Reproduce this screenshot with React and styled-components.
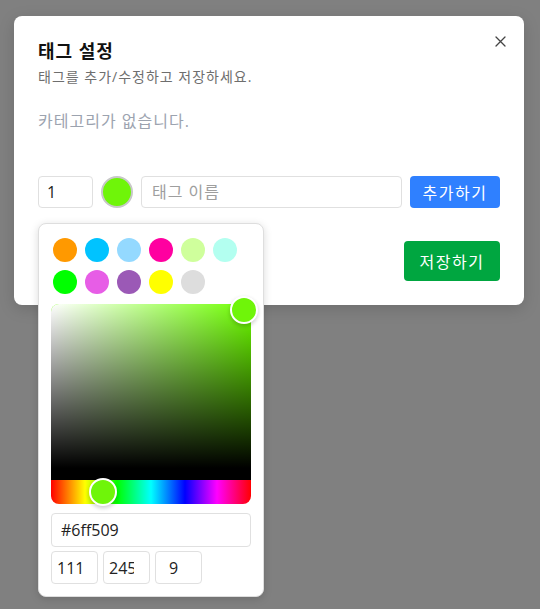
import styled, { createGlobalStyle } from "styled-components";

const FONT = `"Segoe UI", "Open Sans", "Noto Sans CJK KR", sans-serif`;

const GlobalStyle = createGlobalStyle`
  * { box-sizing: border-box; }
  body {
    margin: 0;
    font-family: ${FONT};
    background: #808080;
  }
`;

const SWATCHES = [
  "#ff9900",
  "#00c3ff",
  "#94d9ff",
  "#ff00a0",
  "#cfff9c",
  "#b3fff0",
  "#00ff00",
  "#e75de6",
  "#9b59b6",
  "#ffff00",
  "#dddddd",
];

const Overlay = styled.div`
  min-height: 100vh;
  padding: 16px 0 0 14px;
`;

const Modal = styled.div`
  position: relative;
  width: 510px;
  padding: 24px;
  background: #fff;
  border-radius: 8px;
  box-shadow: 0 4px 16px rgba(0, 0, 0, 0.15);
`;

const Title = styled.h2`
  margin: 0;
  font-size: 18px;
  line-height: 22px;
  font-weight: 700;
  letter-spacing: 1px;
  color: #111;
`;

const Subtitle = styled.p`
  margin: 5px 0 0;
  font-size: 14px;
  line-height: 20px;
  letter-spacing: 1px;
  color: #6e6e6e;
`;

const CloseButton = styled.button`
  position: absolute;
  top: 17px;
  right: 16px;
  width: 16px;
  height: 16px;
  padding: 0;
  border: none;
  background: none;
  display: flex;
  align-items: center;
  justify-content: center;
  cursor: pointer;
`;

const Empty = styled.p`
  margin: 22px 0 43px;
  font-size: 16px;
  line-height: 24px;
  color: #9ca3af;
  letter-spacing: 1px;
`;

const AddRow = styled.div`
  position: relative;
  display: flex;
  align-items: center;
  gap: 8px;
`;

const Field = styled.input`
  height: 32px;
  width: ${(p) => p.$width || "auto"};
  min-width: 0;
  flex: ${(p) => (p.$grow ? 1 : "none")};
  padding: 0 ${(p) => p.$pad || 8}px;
  border: 1px solid #e0e0e0;
  border-radius: 4px;
  font-family: ${FONT};
  font-size: 16px;
  color: #222;
  outline: none;
  &::placeholder {
    color: #9e9e9e;
    letter-spacing: 1px;
  }
`;

const ColorDot = styled.button`
  width: 32px;
  height: 32px;
  flex: none;
  padding: 0;
  border-radius: 50%;
  border: 2px solid #c8c8c8;
  background: ${(p) => p.$color};
  cursor: pointer;
`;

const Button = styled.button`
  height: ${(p) => p.$height}px;
  padding: 0 ${(p) => p.$pad}px;
  border: none;
  border-radius: 4px;
  background: ${(p) => p.$bg};
  color: #fff;
  font-family: ${FONT};
  font-size: 16px;
  letter-spacing: 1.5px;
  cursor: pointer;
`;

const Footer = styled.div`
  margin-top: 33px;
  display: flex;
  justify-content: flex-end;
`;

const Popover = styled.div`
  position: absolute;
  top: calc(100% + 15px);
  left: 0;
  z-index: 10;
  padding: 12px;
  background: #fff;
  border: 1px solid #dedede;
  border-radius: 8px;
  box-shadow: 0 2px 8px rgba(0, 0, 0, 0.15);
`;

const SwatchGrid = styled.div`
  display: grid;
  grid-template-columns: repeat(6, 24px);
  gap: 8px;
  padding: 2px;
  margin-bottom: 8px;
`;

const Swatch = styled.button`
  width: 24px;
  height: 24px;
  padding: 0;
  border: none;
  border-radius: 50%;
  background: ${(p) => p.$color};
  cursor: pointer;
`;

const Picker = styled.div`
  display: flex;
  flex-direction: column;
  width: 200px;
  height: 200px;
`;

const Saturation = styled.div`
  position: relative;
  flex: 1;
  border-radius: 8px 8px 0 0;
  border-bottom: 12px solid #000;
  background-color: ${(p) => p.$hue};
  background-image: linear-gradient(to top, #000, rgba(0, 0, 0, 0)),
    linear-gradient(to right, #fff, rgba(255, 255, 255, 0));
`;

const Hue = styled.div`
  position: relative;
  height: 24px;
  border-radius: 0 0 8px 8px;
  background: linear-gradient(
    to right,
    #f00 0%,
    #ff0 17%,
    #0f0 33%,
    #0ff 50%,
    #00f 67%,
    #f0f 83%,
    #f00 100%
  );
`;

const Pointer = styled.div`
  position: absolute;
  width: 28px;
  height: 28px;
  transform: translate(-50%, -50%);
  border: 2px solid #fff;
  border-radius: 50%;
  background: ${(p) => p.$color};
  box-shadow: 0 2px 4px rgba(0, 0, 0, 0.2);
`;

const HexField = styled(Field)`
  display: block;
  width: 200px;
  height: 34px;
  margin-top: 9px;
  padding: 0 9px;
`;

const RgbRow = styled.div`
  display: flex;
  gap: 5px;
  margin-top: 4px;
`;

const RgbField = styled(Field)`
  width: 47px;
  height: 33px;
  padding: 0 0 0 5px;
  text-align: center;
`;

export default function App() {
  const color = "#6ff509";
  const rgb = [111, 245, 9];
  const sat = { x: 192.6, y: 6.4 };
  const hueX = (94 / 360) * 200;

  return (
    <>
      <GlobalStyle />
      <Overlay>
        <Modal>
          <Title>태그 설정</Title>
          <Subtitle>태그를 추가/수정하고 저장하세요.</Subtitle>
          <CloseButton aria-label="닫기">
            <svg width="11" height="11" viewBox="0 0 11 11">
              <path
                d="M1 1L10 10M10 1L1 10"
                stroke="#444"
                strokeWidth="1.3"
                strokeLinecap="round"
              />
            </svg>
          </CloseButton>

          <Empty>카테고리가 없습니다.</Empty>

          <AddRow>
            <Field $width="55px" defaultValue="1" />
            <ColorDot $color={color} />
            <Field $grow $pad={10} placeholder="태그 이름" />
            <Button $bg="#2f80ff" $height={32} $pad={12.5}>
              추가하기
            </Button>

            <Popover>
              <SwatchGrid>
                {SWATCHES.map((c) => (
                  <Swatch key={c} $color={c} />
                ))}
              </SwatchGrid>
              <Picker>
                <Saturation $hue="hsl(94, 100%, 50%)">
                  <Pointer
                    $color={color}
                    style={{ left: sat.x, top: sat.y }}
                  />
                </Saturation>
                <Hue>
                  <Pointer $color={color} style={{ left: hueX, top: 12 }} />
                </Hue>
              </Picker>
              <HexField defaultValue={color} />
              <RgbRow>
                {rgb.map((v, i) => (
                  <RgbField key={i} type="number" defaultValue={v} />
                ))}
              </RgbRow>
            </Popover>
          </AddRow>

          <Footer>
            <Button $bg="#00a640" $height={40} $pad={15.5}>
              저장하기
            </Button>
          </Footer>
        </Modal>
      </Overlay>
    </>
  );
}
